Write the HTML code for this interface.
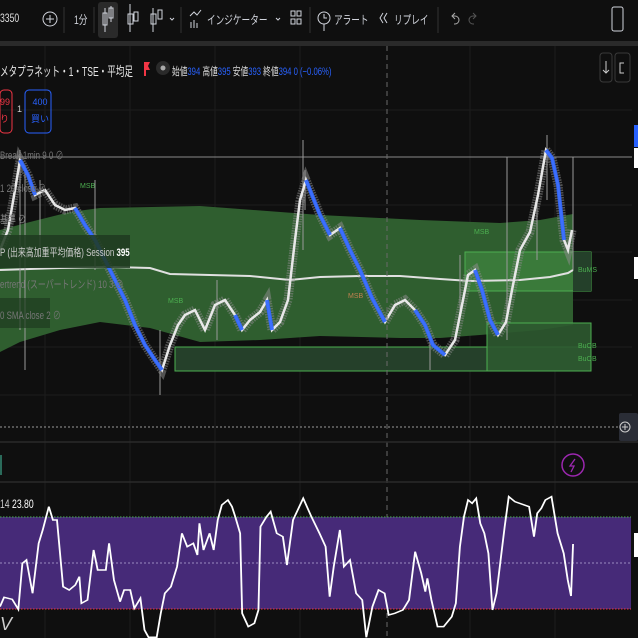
<!DOCTYPE html>
<html><head><meta charset="utf-8"><style>
body{margin:0;width:638px;height:638px;overflow:hidden;background:#0f0f0f;font-family:"Liberation Sans","Noto Sans CJK JP",sans-serif;color:#d1d4dc}
.t{position:absolute;white-space:nowrap;transform-origin:0 50%}
.c{transform:scaleX(0.72)}
svg{position:absolute;left:0;top:0}
</style></head><body>
<svg width="638" height="638" viewBox="0 0 638 638">
<rect width="638" height="638" fill="#0f0f0f"/>
<rect x="0" y="41" width="638" height="5" fill="#2a2a2a"/>
<g stroke="#1c1c1c" stroke-width="1">
<line x1="0" y1="110" x2="632" y2="110"/><line x1="0" y1="205" x2="632" y2="205"/><line x1="0" y1="252" x2="632" y2="252"/>
<line x1="0" y1="300" x2="632" y2="300"/><line x1="0" y1="347" x2="632" y2="347"/><line x1="0" y1="395" x2="632" y2="395"/>
<line x1="45" y1="46" x2="45" y2="638"/><line x1="130" y1="46" x2="130" y2="638"/><line x1="215" y1="46" x2="215" y2="638"/>
<line x1="300" y1="46" x2="300" y2="638"/><line x1="470" y1="46" x2="470" y2="638"/><line x1="555" y1="46" x2="555" y2="638"/>
</g>
<line x1="0" y1="157" x2="632" y2="157" stroke="#8a8a8a" stroke-width="1"/>
<path d="M0,230 L30,222 L70,212 L100,208 L200,206 L320,215 L420,220 L500,223 L540,220 L573,214 L573,325 L540,330 L480,335 L440,338 L400,338 L320,336 L260,340 L200,342 L150,328 L100,322 L60,330 L20,342 L0,352 Z" fill="#2f5e2f"/>
<rect x="175" y="347" width="416" height="24" fill="#25402a" stroke="#4caf50" stroke-width="1"/>
<rect x="487" y="323" width="104" height="48" fill="#2e5a30" stroke="#4caf50" stroke-width="1" fill-opacity="0.9"/>
<rect x="465" y="252" width="126" height="39" fill="#3a7a3a" stroke="#4caf50" stroke-width="1"/>
<rect x="573" y="252" width="18" height="39" fill="#24402a"/>
<polyline points="0,270 60,268 110,267 150,268 170,274 250,276 290,280 320,277 360,276 400,276 440,279 470,281 520,280 550,277 568,273 573,270" fill="none" stroke="#e0e0e0" stroke-width="2"/>
<g stroke="#9a9a9a" stroke-width="1">
<line x1="20" y1="150" x2="20" y2="330"/><line x1="25" y1="165" x2="25" y2="370"/><line x1="40" y1="180" x2="40" y2="250"/>
<line x1="95" y1="180" x2="95" y2="270"/><line x1="160" y1="330" x2="160" y2="395"/><line x1="303" y1="140" x2="303" y2="250"/>
<line x1="305" y1="170" x2="305" y2="210"/><line x1="430" y1="340" x2="430" y2="370"/><line x1="507" y1="157" x2="507" y2="340"/>
<line x1="547" y1="135" x2="547" y2="200"/><line x1="573" y1="157" x2="573" y2="270"/><line x1="537" y1="200" x2="537" y2="260"/>
<line x1="217" y1="280" x2="217" y2="340"/><line x1="460" y1="255" x2="460" y2="320"/>
</g>
<g id="pr">
<polyline points="0,250 8,230 15,190 20,160 28,175 35,195 45,190 55,205 65,210 75,208 85,225 95,240 105,260 115,280 125,300 135,325 145,345 155,360 162,370 170,345 178,325 185,315 195,310 205,330 215,305 225,300 235,315 242,330 250,320 260,312 267,300 272,330 280,322 288,300 295,240 300,200 306,180 312,195 320,215 330,235 340,228 350,250 360,270 372,298 385,322 395,305 405,300 415,310 425,325 433,345 445,355 455,340 462,305 468,275 475,270 482,290 490,320 498,335 506,322 512,290 520,250 530,232 538,195 546,150 552,158 558,185 564,240 568,250 572,230" fill="none" stroke="#8a8a8a" stroke-width="9" stroke-opacity="0.55" stroke-dasharray="1.5,1"/>
<polyline points="0,250 8,230 15,190 20,160 28,175 35,195 45,190 55,205 65,210 75,208 85,225 95,240 105,260 115,280 125,300 135,325 145,345 155,360 162,370 170,345 178,325 185,315 195,310 205,330 215,305 225,300 235,315 242,330 250,320 260,312 267,300 272,330 280,322 288,300 295,240 300,200 306,180 312,195 320,215 330,235 340,228 350,250 360,270 372,298 385,322 395,305 405,300 415,310 425,325 433,345 445,355 455,340 462,305 468,275 475,270 482,290 490,320 498,335 506,322 512,290 520,250 530,232 538,195 546,150 552,158 558,185 564,240 568,250 572,230" fill="none" stroke="#e8e8e8" stroke-width="2.5"/>
</g>
<g fill="none" stroke="#2962ff" stroke-width="4" stroke-opacity="0.9">
<polyline points="20,160 28,175 35,195"/><polyline points="75,208 85,225 95,240 105,260 115,280 125,300 135,325 145,345 155,360 162,370"/>
<polyline points="235,315 242,330"/><polyline points="267,300 272,330"/><polyline points="306,180 312,195 320,215 330,235"/>
<polyline points="340,228 350,250 360,270 372,298 385,322"/><polyline points="415,310 425,325 433,345 445,355"/>
<polyline points="475,270 482,290 490,320 498,335"/><polyline points="546,150 552,158 558,185 564,240"/>
</g>
<g font-family="Liberation Sans" font-size="7" fill="#4caf50">
<text x="80" y="188">MSB</text><text x="168" y="303">MSB</text><text x="474" y="234">MSB</text><text x="578" y="272">BuMS</text><text x="578" y="348">BuOB</text><text x="578" y="361">BuOB</text>
</g>
<text x="348" y="298" font-size="7" fill="#c08050">MSB</text>
<rect x="0" y="235" width="130" height="33" fill="#1e3a20" opacity="0.85"/>
<rect x="0" y="298" width="50" height="30" fill="#1e3a20" opacity="0.7"/>
<line x1="387" y1="46" x2="387" y2="638" stroke="#6a6a6a" stroke-width="1" stroke-dasharray="5,4"/>
<line x1="0" y1="427" x2="620" y2="427" stroke="#9a9a9a" stroke-width="1" stroke-dasharray="2,2"/>
<line x1="0" y1="442" x2="638" y2="442" stroke="#2a2a2a" stroke-width="1.5"/>
<line x1="0" y1="482" x2="638" y2="482" stroke="#2a2a2a" stroke-width="1.5"/>
<rect x="619" y="413" width="19" height="28" rx="2" fill="#2a2d36"/>
<circle cx="625" cy="427" r="5" fill="none" stroke="#ccc" stroke-width="1"/><path d="M625,424v6M622,427h6" stroke="#ccc"/>
<circle cx="573" cy="465" r="11" fill="none" stroke="#9c27b0" stroke-width="1.5"/>
<path d="M575,459 L570,466 L574,466 L571,472" fill="none" stroke="#9c27b0" stroke-width="1.3"/>
<rect x="0" y="455" width="2" height="20" fill="#2a6a5a"/>
<rect x="0" y="517" width="631" height="92" fill="#462a78"/>
<line x1="0" y1="517" x2="631" y2="517" stroke="#4caf50" stroke-width="1" stroke-dasharray="1.5,1.5"/>
<line x1="0" y1="563" x2="631" y2="563" stroke="#9a8ac0" stroke-width="1" stroke-dasharray="2,2"/>
<line x1="0" y1="609" x2="631" y2="609" stroke="#f23645" stroke-width="1" stroke-dasharray="1.5,1.5"/>
<g transform="translate(0,400) scale(0.407,0.3333)">
<polyline fill="none" stroke="#ffffff" stroke-width="4.5" points="0,620 10,592 30,598 45,628 55,490 65,480 80,580 95,430 105,390 120,320 130,360 140,360 155,560 170,570 185,555 195,530 200,610 215,600 230,450 240,510 260,510 268,430 280,540 295,605 305,570 320,570 330,625 345,595 355,690 365,712 385,712 395,640 405,580 420,560 435,500 447,400 460,440 475,430 485,465 490,370 500,450 515,400 525,450 535,360 545,315 560,300 570,320 578,350 590,400 595,640 610,680 625,670 635,630 640,380 655,350 665,335 680,400 695,410 705,495 720,360 745,295 765,350 785,400 800,440 810,590 820,500 835,390 845,500 860,480 875,580 890,600 900,712 915,620 930,570 945,580 955,645 970,640 990,630 1005,600 1020,455 1035,520 1045,575 1050,535 1060,600 1075,680 1090,680 1110,650 1120,610 1130,440 1140,350 1150,300 1160,310 1170,295 1180,370 1190,400 1200,460 1210,630 1220,580 1230,480 1240,380 1250,290 1265,305 1300,320 1312,410 1320,340 1330,325 1340,300 1355,290 1370,400 1385,460 1395,540 1403,588 1408,432"/>
</g>
<text x="0" y="630" font-size="18" font-style="italic" fill="#ccc">V</text>
<rect x="634" y="125" width="4" height="22" fill="#2962ff"/>
<rect x="634" y="148" width="4" height="20" fill="#ffffff"/>
<rect x="634" y="257" width="4" height="22" fill="#ffffff"/>
<rect x="634" y="533" width="4" height="24" fill="#ffffff"/>
<g fill="none" stroke="#d1d4dc" stroke-width="1">
<circle cx="50" cy="19" r="7"/><path d="M50,15v8M46,19h8"/>
<line x1="64" y1="7" x2="64" y2="33" stroke="#333"/><line x1="94" y1="7" x2="94" y2="33" stroke="#333"/>
<rect x="98" y="2" width="20" height="36" rx="3" fill="#2a2a2a" stroke="none"/>
<path d="M105,8v24M103,13h4v12h-4zM111,6v16M109,8h4v10h-4z"/>
<path d="M130,4v28M128,14h5v10h-5zM134,12h4v9h-4z"/>
<path d="M153,8v24M151,14h5v10h-5z M158,10h4v9h-4z"/>
<path d="M170,18l2,2 2,-2"/>
<line x1="181" y1="7" x2="181" y2="33" stroke="#333"/>
<path d="M191,28v-6M194,28v-8M197,28v-5M190,16l4,-4 3,3 4,-5"/>
<path d="M276,18l2,2 2,-2"/>
<rect x="291" y="11" width="4" height="5"/><rect x="297" y="11" width="4" height="5"/><rect x="291" y="19" width="4" height="5"/><rect x="297" y="19" width="4" height="5"/>
<line x1="310" y1="7" x2="310" y2="33" stroke="#333"/>
<circle cx="324" cy="18" r="6"/><path d="M324,24v7M324,14v4h3"/>
<path d="M383,13l-3,5 3,5M387,13l-3,5 3,5"/>
<line x1="438" y1="7" x2="438" y2="33" stroke="#333"/>
<path d="M452,16h3a4,4 0 0 1 0,8h-1M455,13l-3,3 3,3" stroke="#aaa"/>
<path d="M476,16h-3a4,4 0 0 0 0,8h1M473,13l3,3 -3,3" stroke="#555"/>
<rect x="612" y="7" width="11" height="24" rx="2"/>
</g>
<rect x="0" y="90" width="12" height="43" rx="4" fill="none" stroke="#f23645"/>
<rect x="25" y="90" width="26" height="43" rx="4" fill="none" stroke="#2962ff"/>
<path d="M145,62h5l-2,4 2,4h-5z" fill="#f23645"/><rect x="144" y="62" width="2" height="14" fill="#f23645"/>
<circle cx="163" cy="68" r="7" fill="#2a2a2a"/><circle cx="163" cy="68" r="2.5" fill="#aaa"/>
<rect x="600" y="53" width="12" height="29" rx="3" fill="none" stroke="#3a3a3a"/>
<rect x="615" y="53" width="15" height="29" rx="3" fill="none" stroke="#3a3a3a"/>
<path d="M606,61v12M603,70l3,3 3,-3" fill="none" stroke="#ccc"/>
<path d="M624,63h-4v10h4" fill="none" stroke="#ccc"/>
</svg>
<div class="t c" style="left:0;top:11px;font-size:12px;color:#ddd">3350</div>
<div class="t c" style="left:74px;top:11px;font-size:12px">1分</div>
<div class="t c" style="left:207px;top:11px;font-size:12px">インジケーター</div>
<div class="t c" style="left:334px;top:11px;font-size:12px">アラート</div>
<div class="t c" style="left:394px;top:11px;font-size:12px">リプレイ</div>
<div class="t" style="left:0;top:61px;font-size:13px;color:#e6e6e6;transform:scaleX(0.66)">メタプラネット・1・TSE・平均足</div>
<div class="t" style="left:172px;top:63px;font-size:11px;color:#ddd;transform:scaleX(0.7)">始値<span style="color:#2962ff">394</span> 高値<span style="color:#2962ff">395</span> 安値<span style="color:#2962ff">393</span> 終値<span style="color:#2962ff">394 0 (−0.06%)</span></div>
<div class="t" style="left:0;top:94px;font-size:9px;color:#f23645;line-height:17px">99<br>り</div>
<div class="t" style="left:17px;top:104px;font-size:9px;color:#ccc">1</div>
<div class="t" style="left:31px;top:94px;font-size:9px;color:#2962ff;line-height:17px;text-align:center">400<br>買い</div>
<div class="t c" style="left:0;top:147px;font-size:11px;color:#777">Break 1min 9 0 ⊘</div>
<div class="t c" style="left:0;top:180px;font-size:11px;color:#777">1 20 close ⊘</div>
<div class="t c" style="left:0;top:211px;font-size:11px;color:#888">基準 ⊘</div>
<div class="t c" style="left:0;top:244px;font-size:11px;color:#ccc">P (出来高加重平均価格) Session <b style="color:#fff">395</b></div>
<div class="t c" style="left:0;top:276px;font-size:11px;color:#777">ertrend (スーパートレンド) 10 3 ⊘</div>
<div class="t c" style="left:0;top:307px;font-size:11px;color:#777">0 SMA close 2 ⊘</div>
<div class="t c" style="left:0;top:497px;font-size:12px;color:#ccc">14 <span style="color:#fff">23.80</span></div>
</body></html>
